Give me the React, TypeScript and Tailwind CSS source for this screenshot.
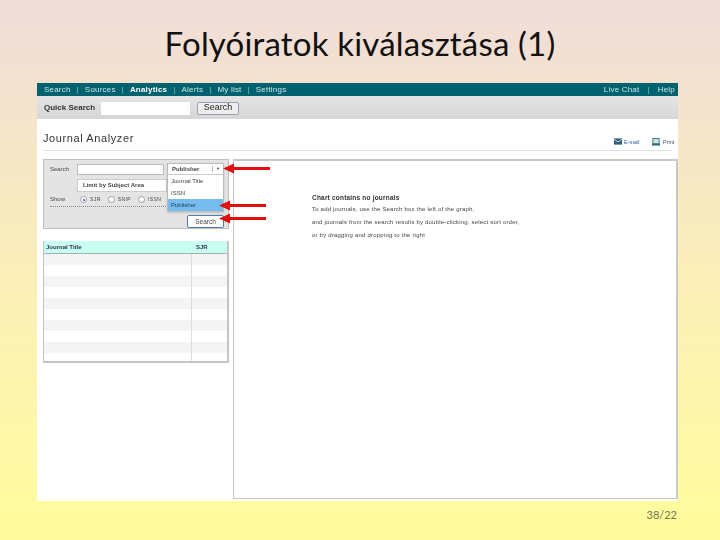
import React from "react";

const navLeft = ["Search", "Sources", "Analytics", "Alerts", "My list", "Settings"];
const rows = [0, 1, 2, 3, 4, 5, 6, 7, 8, 9];

function Arrow({ className }: { className: string }) {
  return (
    <svg className={className} width="47" height="11" viewBox="0 0 47 11">
      <path d="M0 5.5 L11 0.5 V4 H47 V7 H11 V10.5 Z" fill="#e01010" />
    </svg>
  );
}

function Radio({ label, on }: { label: string; on?: boolean }) {
  return (
    <div className="flex items-center gap-[3px]">
      <span className="w-[7px] h-[7px] rounded-full border border-gray-400 bg-white flex items-center justify-center">
        {on && <span className="w-[2px] h-[2px] rounded-full bg-gray-600" />}
      </span>
      <span className="tracking-[0.4px]">{label}</span>
    </div>
  );
}

export default function App() {
  return (
    <div className="relative w-[720px] h-[540px] overflow-hidden flex flex-col bg-gradient-to-b from-[#f0dcd9] via-[#fbeeb8] to-[#fffd9c] font-['Liberation_Sans',sans-serif]">
      <h1 className="h-[83px] pt-[21px] text-center text-[33px] leading-[44px] tracking-[0.18px] text-[#111] font-['Lato',sans-serif] shrink-0">
        Folyóiratok kiválasztása (1)
      </h1>

      {/* pasted screenshot */}
      <div className="relative ml-[37px] w-[641px] h-[418px] bg-white flex flex-col shrink-0 blur-[0.4px]">
        <div className="h-[13px] bg-[#00626e] flex items-center justify-between pl-[7px] pr-[3px] text-[8px] tracking-[0.2px] text-[#cfe6e6]">
          <div className="flex items-center">
            {navLeft.map((item, i) => (
              <React.Fragment key={item}>
                <span className={item === "Analytics" ? "font-bold text-white" : ""}>{item}</span>
                {i < navLeft.length - 1 && <span className="mx-[6px] text-[#8fbcbc]">|</span>}
              </React.Fragment>
            ))}
          </div>
          <div className="flex items-center">
            <span>Live Chat</span>
            <span className="mx-[8px] text-[#8fbcbc]">|</span>
            <span>Help</span>
          </div>
        </div>

        <div className="h-[23px] bg-gradient-to-b from-[#e4e4e4] to-[#d6d6d6] flex items-center pl-[7px] pt-[1px] text-[8px]">
          <span className="font-bold text-[#333] w-[57px]">Quick Search</span>
          <span className="w-[89px] h-[13px] bg-white" />
          <span className="ml-[7px] w-[42px] h-[13px] border border-gray-400 rounded-[2px] bg-[#eee] flex items-center justify-center text-[9px] text-[#222]">
            Search
          </span>
        </div>

        <div className="mx-[6px] h-[32px] border-b border-[#e2e2e2] flex items-end justify-between pb-[5px]">
          <span className="text-[11px] leading-[14px] tracking-[0.6px] text-[#333]">Journal Analyzer</span>
          <div className="flex items-center text-[5.5px] text-[#456] -mb-[1px]">
            <svg width="8" height="7" viewBox="0 0 9 7">
              <rect width="9" height="7" fill="#2f5f7a" />
              <path d="M0 1 L4.5 4 L9 1" stroke="#cfe0e8" fill="none" />
            </svg>
            <span className="ml-[2px] w-[28px] text-[#2f5f9a]">E-mail</span>
            <svg width="8" height="8" viewBox="0 0 9 8">
              <rect x="1" y="0" width="7" height="6" fill="#cfe0e0" stroke="#2f6f7a" />
              <rect x="0" y="6" width="9" height="2" fill="#2f6f7a" />
            </svg>
            <span className="ml-[3px] w-[10px] mr-[-1px]">Print</span>
          </div>
        </div>

        <div className="flex flex-1 mt-[8px] pl-[6px] pb-[2px] gap-[4px]">
          <div className="w-[186px] flex flex-col gap-[12px]">
            <div className="relative h-[70px] bg-[#e4e4e4] border border-[#bdbdbd] text-[6px] text-[#444]">
              <div className="flex items-center h-[15px] mt-[2px] pl-[6px]">
                <span className="w-[27px]">Search</span>
                <span className="w-[87px] h-[11px] bg-white border border-[#bbb]" />
              </div>
              <div className="mt-[2px] ml-[33px] w-[90px] h-[13px] bg-white border border-[#ccc] flex items-center pl-[5px] font-bold">
                Limit by Subject Area
              </div>
              <div className="flex items-center gap-[7px] mt-[3px] pl-[6px] text-[5px]">
                <span className="w-[23px] text-[6px]">Show</span>
                <Radio label="SJR" on />
                <Radio label="SNIP" />
                <Radio label="ISSN" />
              </div>
              <div className="mt-[2px] ml-[6px] w-[116px] border-t border-dotted border-[#888]" />
              <div className="mt-[8px] ml-[143px] w-[37px] h-[13px] bg-white border border-[#4a7fb0] rounded-[2px] flex items-center justify-center text-[6.5px]">
                Search
              </div>

              {/* open select */}
              <div className="absolute left-[123px] top-[3px] w-[57px] bg-white border border-[#bbb] shadow-sm">
                <div className="h-[11px] flex items-center justify-between pl-[4px] pr-[3px] border-b border-[#ccc] font-bold">
                  <span>Publisher</span>
                  <span className="border-l border-[#bbb] pl-[3px] text-[4px]">▼</span>
                </div>
                <div className="h-[12px] flex items-center pl-[3px]">Journal Title</div>
                <div className="h-[12px] flex items-center pl-[3px]">ISSN</div>
                <div className="h-[12px] flex items-center pl-[3px] bg-[#75bdf0] text-[#245]">Publisher</div>
              </div>
            </div>

            <div className="h-[122px] border-r-2 border-b-2 border-l border-[#c4c4c4] flex flex-col overflow-hidden">
              <div className="h-[13px] shrink-0 bg-[#c8fdf2] border-b border-[#9cb5b0] flex items-center text-[6px] font-bold text-[#335]">
                <span className="w-[149px] pl-[2px]">Journal Title</span>
                <span className="pl-[3px]">SJR</span>
              </div>
              <div className="flex-1 flex flex-col">
                {rows.map((r) => (
                  <div key={r} className={`h-[11px] shrink-0 flex ${r % 2 === 0 ? "bg-[#f4f4f4]" : "bg-white"}`}>
                    <span className="w-[148px] border-r border-[#ddd]" />
                  </div>
                ))}
                <div className="flex-1 flex">
                  <span className="w-[148px] border-r border-[#ddd]" />
                </div>
              </div>
            </div>
          </div>

          <div className="w-[445px] border-t-2 border-l border-r-2 border-b border-[#c8c8c8] pl-[78px] pt-[32px] text-[6px] text-[#444]">
            <p className="text-[6.5px] font-bold leading-[9px] tracking-[0.2px] text-[#333]">Chart contains no journals</p>
            <p className="mt-[3px] leading-[9px] tracking-[0.2px]">To add journals, use the Search box the left of the graph,</p>
            <p className="mt-[4px] leading-[9px] tracking-[0.2px]">and journals from the search results by double-clicking, select sort order,</p>
            <p className="mt-[4px] leading-[9px] tracking-[0.2px]">or by dragging and dropping to the right</p>
          </div>
        </div>

        <Arrow className="absolute left-[186px] top-[80px]" />
        <Arrow className="absolute left-[182px] top-[117px]" />
        <Arrow className="absolute left-[182px] top-[130px]" />
      </div>

      <div className="mr-[43px] mt-[7px] text-right text-[11px] leading-[14px] text-[#77754f] font-['Lato',sans-serif]">38/22</div>
    </div>
  );
}
